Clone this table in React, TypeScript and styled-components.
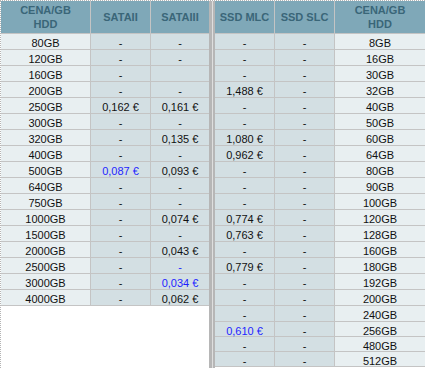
import * as React from "react";
import styled, { createGlobalStyle } from "styled-components";

type Price = { value: string; best?: boolean };

interface HddRow {
  size: string;
  sata2: Price;
  sata3: Price;
}

interface SsdRow {
  mlc: Price;
  slc: Price;
  size: string;
}

const p = (value: string, best = false): Price => ({ value, best });
const none = p("-");

const hddRows: HddRow[] = [
  { size: "80GB", sata2: none, sata3: none },
  { size: "120GB", sata2: none, sata3: none },
  { size: "160GB", sata2: none, sata3: p("") },
  { size: "200GB", sata2: none, sata3: none },
  { size: "250GB", sata2: p("0,162 €"), sata3: p("0,161 €") },
  { size: "300GB", sata2: none, sata3: none },
  { size: "320GB", sata2: none, sata3: p("0,135 €") },
  { size: "400GB", sata2: none, sata3: none },
  { size: "500GB", sata2: p("0,087 €", true), sata3: p("0,093 €") },
  { size: "640GB", sata2: none, sata3: none },
  { size: "750GB", sata2: none, sata3: none },
  { size: "1000GB", sata2: none, sata3: p("0,074 €") },
  { size: "1500GB", sata2: none, sata3: none },
  { size: "2000GB", sata2: none, sata3: p("0,043 €") },
  { size: "2500GB", sata2: none, sata3: p("-", true) },
  { size: "3000GB", sata2: none, sata3: p("0,034 €", true) },
  { size: "4000GB", sata2: none, sata3: p("0,062 €") },
];

const ssdRows: SsdRow[] = [
  { mlc: none, slc: none, size: "8GB" },
  { mlc: none, slc: none, size: "16GB" },
  { mlc: none, slc: none, size: "30GB" },
  { mlc: p("1,488 €"), slc: none, size: "32GB" },
  { mlc: none, slc: none, size: "40GB" },
  { mlc: none, slc: none, size: "50GB" },
  { mlc: p("1,080 €"), slc: none, size: "60GB" },
  { mlc: p("0,962 €"), slc: none, size: "64GB" },
  { mlc: none, slc: none, size: "80GB" },
  { mlc: none, slc: none, size: "90GB" },
  { mlc: none, slc: none, size: "100GB" },
  { mlc: p("0,774 €"), slc: none, size: "120GB" },
  { mlc: p("0,763 €"), slc: none, size: "128GB" },
  { mlc: none, slc: none, size: "160GB" },
  { mlc: p("0,779 €"), slc: none, size: "180GB" },
  { mlc: none, slc: none, size: "192GB" },
  { mlc: none, slc: none, size: "200GB" },
  { mlc: none, slc: none, size: "240GB" },
  { mlc: p("0,610 €", true), slc: none, size: "256GB" },
  { mlc: none, slc: none, size: "480GB" },
  { mlc: none, slc: none, size: "512GB" },
];

const PriceCell = ({ price }: { price: Price }) => (
  <Cell $tone="price" $best={price.best}>
    {price.value}
  </Cell>
);

export default function App() {
  return (
    <>
      <GlobalStyle />
      <Page>
        <PriceGrid
          $cols="89px 59px 58px"
          $rows={`32px repeat(${hddRows.length}, 15px)`}
        >
          <HeadCell>
            CENA/GB
            <br />
            HDD
          </HeadCell>
          <HeadCell>SATAII</HeadCell>
          <HeadCell>SATAIII</HeadCell>
          {hddRows.map((r) => (
            <React.Fragment key={r.size}>
              <Cell $tone="label">{r.size}</Cell>
              <PriceCell price={r.sata2} />
              <PriceCell price={r.sata3} />
            </React.Fragment>
          ))}
        </PriceGrid>

        <Divider />

        <PriceGrid $cols="59px 59px 90px" $rows="32px repeat(18, 15px) repeat(3, 14px)">
          <HeadCell>SSD MLC</HeadCell>
          <HeadCell>SSD SLC</HeadCell>
          <HeadCell>
            CENA/GB
            <br />
            HDD
          </HeadCell>
          {ssdRows.map((r) => (
            <React.Fragment key={r.size}>
              <PriceCell price={r.mlc} />
              <PriceCell price={r.slc} />
              <Cell $tone="label">{r.size}</Cell>
            </React.Fragment>
          ))}
        </PriceGrid>
      </Page>
    </>
  );
}

//////////
// Style
//////////
const GlobalStyle = createGlobalStyle`
  html, body {
    margin: 0;
    padding: 0;
    background: #ffffff;
  }
  body {
    font-family: "Liberation Sans", Arial, sans-serif;
    font-size: 11px;
  }
`;

const Page = styled.div`
  display: flex;
  align-items: flex-start;
  width: 425px;
  height: 368px;
  box-sizing: border-box;
  border-top: 1px dotted #b4b4b4;
  border-left: 1px dotted #b4b4b4;
  overflow: hidden;
`;

const PriceGrid = styled.div<{ $cols: string; $rows: string }>`
  display: grid;
  grid-template-columns: ${(p) => p.$cols};
  grid-template-rows: ${(p) => p.$rows};
  gap: 1px;
  padding-bottom: 1px;
  background: #c4c4c4;
`;

const Divider = styled.div`
  align-self: stretch;
  width: 1px;
  flex: none;
  background: #dedede;
  border-left: 3px solid #b6b6b6;
  border-right: 2px solid #b6b6b6;
`;

const HeadCell = styled.div`
  display: flex;
  align-items: center;
  justify-content: center;
  text-align: center;
  background: #7fa8b8;
  color: #3a6678;
  font-weight: bold;
  line-height: 14px;
`;

const Cell = styled.div<{ $tone: "label" | "price"; $best?: boolean }>`
  text-align: center;
  line-height: 19px;
  white-space: nowrap;
  background: ${(p) => (p.$tone === "label" ? "#e8eff1" : "#d3dfe3")};
  color: ${(p) => (p.$best ? "#1f1fff" : "#111111")};
`;
